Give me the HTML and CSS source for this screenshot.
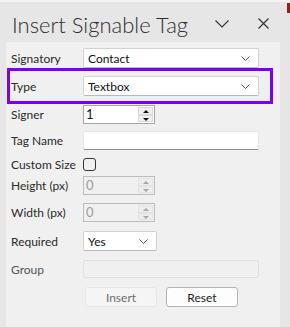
FILE: index.html
```html
<!DOCTYPE html>
<html lang="en">
<head>
    <meta charset="UTF-8">
    <meta name="viewport" content="width=device-width, initial-scale=1.0">
    <title>Insert Signable Tag</title>
    <link rel="stylesheet" href="styles.css">
</head>
<body>
    <div class="pane">
        <div class="edge-mark"></div>
        <div class="header">
            <h1>Insert Signable Tag</h1>
            <button class="icon-btn collapse" title="Options">
                <svg width="14" height="8" viewBox="0 0 14 8"><path d="M0.5 0.5 L7 7 L13.5 0.5" fill="none" stroke="#333" stroke-width="1.1"/></svg>
            </button>
            <button class="icon-btn close" title="Close">
                <svg width="11" height="11" viewBox="0 0 11 11"><path d="M0.5 0.5 L10.5 10.5 M10.5 0.5 L0.5 10.5" fill="none" stroke="#333" stroke-width="1.2"/></svg>
            </button>
        </div>

        <div class="panel">
            <!-- Signatory -->
            <div class="row row-signatory">
                <label>Signatory</label>
                <div class="select wide">
                    <span>Contact</span>
                    <svg width="9" height="5" viewBox="0 0 9 5"><path d="M0.5 0.5 L4.5 4.5 L8.5 0.5" fill="none" stroke="#555" stroke-width="1"/></svg>
                </div>
            </div>

            <!-- Type (highlighted) -->
            <div class="row row-type highlight">
                <label>Type</label>
                <div class="select wide">
                    <span>Textbox</span>
                    <svg width="9" height="5" viewBox="0 0 9 5"><path d="M0.5 0.5 L4.5 4.5 L8.5 0.5" fill="none" stroke="#555" stroke-width="1"/></svg>
                </div>
            </div>

            <!-- Signer -->
            <div class="row row-signer">
                <label>Signer</label>
                <div class="spin">
                    <span class="spin-value">1</span>
                    <div class="spin-btns">
                        <span class="spin-up"></span>
                        <span class="spin-down"></span>
                    </div>
                </div>
            </div>

            <!-- Tag Name -->
            <div class="row row-tagname">
                <label>Tag Name</label>
                <input type="text" class="text-input">
            </div>

            <!-- Custom Size -->
            <div class="row row-custom">
                <label>Custom Size</label>
                <span class="checkbox"></span>
            </div>

            <!-- Height -->
            <div class="row row-height">
                <label>Height (px)</label>
                <div class="spin disabled">
                    <span class="spin-value">0</span>
                    <div class="spin-btns">
                        <span class="spin-up"></span>
                        <span class="spin-down"></span>
                    </div>
                </div>
            </div>

            <!-- Width -->
            <div class="row row-width">
                <label>Width (px)</label>
                <div class="spin disabled">
                    <span class="spin-value">0</span>
                    <div class="spin-btns">
                        <span class="spin-up"></span>
                        <span class="spin-down"></span>
                    </div>
                </div>
            </div>

            <!-- Required -->
            <div class="row row-required">
                <label>Required</label>
                <div class="select short">
                    <span>Yes</span>
                    <svg width="9" height="5" viewBox="0 0 9 5"><path d="M0.5 0.5 L4.5 4.5 L8.5 0.5" fill="none" stroke="#555" stroke-width="1"/></svg>
                </div>
            </div>

            <!-- Group -->
            <div class="row row-group">
                <label class="muted">Group</label>
                <div class="text-input disabled"></div>
            </div>

            <!-- Actions -->
            <div class="row row-actions">
                <span></span>
                <div class="actions">
                    <button class="btn" disabled>Insert</button>
                    <button class="btn">Reset</button>
                </div>
            </div>
        </div>
    </div>
</body>
</html>
```

FILE: styles.css
```css
* {
    box-sizing: border-box;
}
body {
    margin: 0;
    padding: 0;
    font-family: Lato, "Open Sans", Arial, sans-serif;
    font-size: 12px;
    color: #222;
    background-color: #e6e6e6;
}
.pane {
    position: relative;
    width: 290px;
    height: 327px;
    overflow: hidden;
    border-top: 2px solid #f2f2f2;
}
.edge-mark {
    position: absolute;
    top: 1px;
    right: 0;
    width: 3px;
    height: 10px;
    background-color: #9e1a1a;
}
.header {
    display: flex;
    align-items: center;
    height: 40px;
    padding-left: 12px;
}
.header h1 {
    flex: 1;
    margin: 0;
    padding-top: 4px;
    font-size: 22px;
    font-weight: 300;
    color: #2e2e2e;
    white-space: nowrap;
}
.icon-btn {
    display: flex;
    align-items: center;
    justify-content: center;
    padding: 0;
    border: none;
    background: none;
}
.collapse {
    width: 14px;
    height: 8px;
    margin-top: 3px;
    margin-right: 29px;
}
.close {
    width: 11px;
    height: 11px;
    margin-top: 3px;
    margin-right: 21px;
}
.panel {
    width: 274px;
    height: 285px;
    margin-left: 6px;
    padding: 6px 0 0 5px;
    background-color: #f0f0f0;
}
.row {
    display: grid;
    grid-template-columns: 72px auto;
    align-items: center;
    justify-items: start;
}
.row label {
    color: #2a2a2a;
}
.row label.muted {
    color: #555;
}
.row-signatory { height: 20px; }
.row-type { height: 36px; }
.row-signer { height: 19px; margin-top: 1px; }
.row-tagname { height: 19px; margin-top: 7px; }
.row-custom { height: 13px; margin-top: 7px; }
.row-height { height: 19px; margin-top: 6px; }
.row-width { height: 19px; margin-top: 8px; }
.row-required { height: 20px; margin-top: 9px; }
.row-group { height: 18px; margin-top: 9px; }
.row-actions { height: 20px; margin-top: 9px; }

.highlight {
    width: 266px;
    margin-left: -4px;
    padding-left: 1px;
    border: 3px solid #7c00f5;
    grid-template-columns: 72px auto;
}
.select {
    display: flex;
    align-items: center;
    justify-content: space-between;
    height: 20px;
    padding: 0 8px 0 4px;
    background-color: #fff;
    border: 1px solid #d2d2d2;
    border-bottom-color: #b9b9b9;
    border-radius: 2px;
    color: #111;
}
.select.wide {
    width: 176px;
}
.select.short {
    width: 74px;
}
.text-input {
    width: 176px;
    height: 19px;
    margin: 0;
    padding: 0 4px;
    font: inherit;
    background-color: #fff;
    border: 1px solid #e6e6e6;
    border-bottom-color: #8f8f8f;
    border-radius: 2px;
    outline: none;
}
.text-input.disabled {
    height: 18px;
    background-color: #f0f0f0;
    border: 1px solid #e0e0e0;
}
.spin {
    display: flex;
    align-items: stretch;
    justify-content: space-between;
    width: 72px;
    height: 19px;
    padding: 1px 1px 1px 2px;
    background-color: #fff;
    border: 1px solid #a5a5a5;
}
.spin-value {
    font-size: 13px;
    line-height: 15px;
    color: #111;
}
.spin-btns {
    display: flex;
    flex-direction: column;
    width: 15px;
}
.spin-up,
.spin-down {
    position: relative;
    flex: 1;
    background-color: #f0f0f0;
    border: 1px solid #dadada;
}
.spin-up::after,
.spin-down::after {
    content: "";
    position: absolute;
    left: 4px;
    top: 2px;
    border-left: 3px solid transparent;
    border-right: 3px solid transparent;
}
.spin-up::after {
    border-bottom: 3px solid #111;
}
.spin-down::after {
    border-top: 3px solid #111;
}
.spin.disabled {
    background-color: #f0f0f0;
    border-color: #bcbcbc;
}
.spin.disabled .spin-value {
    color: #9c9c9c;
}
.spin.disabled .spin-up,
.spin.disabled .spin-down {
    background-color: #ededed;
    border-color: #e3e3e3;
}
.spin.disabled .spin-up::after {
    border-bottom-color: #a8a8a8;
}
.spin.disabled .spin-down::after {
    border-top-color: #a8a8a8;
}
.checkbox {
    width: 13px;
    height: 13px;
    border: 1px solid #333;
    border-radius: 3px;
}
.actions {
    display: flex;
    gap: 9px;
    padding-left: 2px;
}
.btn {
    width: 72px;
    height: 20px;
    padding: 0;
    font: inherit;
    color: #1b1b1b;
    background-color: #fdfdfd;
    border: 1px solid #b3b3b3;
    border-radius: 3px;
}
.btn:disabled {
    color: #6e6e6e;
    background-color: #f5f5f5;
    border-color: #e6e6e6;
}
```
